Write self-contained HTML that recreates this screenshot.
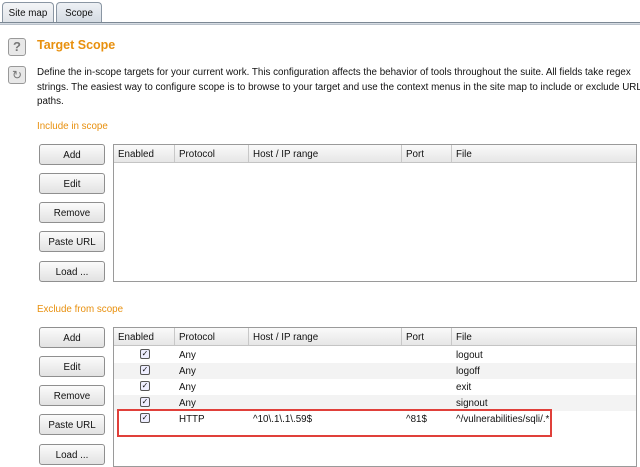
<!DOCTYPE html>
<html><head><style>
*{margin:0;padding:0;box-sizing:border-box}
body{width:640px;height:461px;background:#fff;font-family:"Liberation Sans",sans-serif;font-size:9.8px;color:#111;position:relative;overflow:hidden}
.a{position:absolute}
.tab{position:absolute;top:2px;height:21px;border:1px solid #8a96a3;border-bottom:none;border-radius:4px 4px 0 0;background:linear-gradient(#f4f5f7,#dfe3e8);font-size:9.8px;padding-top:5px;text-align:center}
.btn{position:absolute;left:39px;width:66px;height:21px;border:1px solid #8f8f8f;border-radius:3px;background:linear-gradient(#fbfbfb,#e2e2e2);text-align:center;padding-top:5px;font-size:9.8px}
.tbl{position:absolute;left:113px;width:524px;border:1px solid #9a9a9a;background:#fff}
.hd{position:relative;height:18px;background:linear-gradient(#fafafa,#e6e6e6);border-bottom:1px solid #c4c4c4}
.hd span{position:absolute;top:0;height:17px;padding:4px 0 0 4px;border-right:1px solid #c8c8c8}
.row{position:absolute;height:16px;width:100%}
.row span{position:absolute;top:3px}
.cb{position:absolute;left:26px;top:2px;width:10px;height:10px;border:1px solid #555;border-radius:2px;background:#eef;font-size:8px;line-height:8px;text-align:center}
.orange{color:#e8900e}
</style></head><body>
<div class="tab" style="left:2px;width:52px">Site map</div>
<div class="tab" style="left:56px;width:46px;background:linear-gradient(#eef1f5,#d3dae2)">Scope</div>
<div class="a" style="left:0;top:22px;width:640px;height:3px;border-top:1px solid #7c8894;border-bottom:1px solid #b9c1ca;background:#d5dbe2"></div>
<div class="a" style="left:8px;top:38px;width:18px;height:18px;border:1px solid #999;border-radius:3px;background:#e8e8e8;color:#777;font-weight:bold;font-size:13px;text-align:center;line-height:16px">?</div>
<div class="a" style="left:8px;top:66px;width:18px;height:18px;border:1px solid #999;border-radius:3px;background:#e8e8e8;color:#777;font-size:12px;text-align:center;line-height:16px">↻</div>
<div class="a orange" style="left:37px;top:38px;font-size:12.5px;font-weight:bold">Target Scope</div>
<div class="a" style="left:37px;top:66px;white-space:nowrap;line-height:14.5px">Define the in-scope targets for your current work. This configuration affects the behavior of tools throughout the suite. All fields take regex<br>strings. The easiest way to configure scope is to browse to your target and use the context menus in the site map to include or exclude URL<br>paths.</div>
<div class="a orange" style="left:37px;top:121px">Include in scope</div>
<div class="btn" style="top:144px">Add</div>
<div class="btn" style="top:173px">Edit</div>
<div class="btn" style="top:202px">Remove</div>
<div class="btn" style="top:231px">Paste URL</div>
<div class="btn" style="top:261px">Load ...</div>
<div class="tbl" style="top:144px;height:138px">
<div class="hd"><span style="left:0;width:61px">Enabled</span><span style="left:61px;width:74px">Protocol</span><span style="left:135px;width:153px">Host / IP range</span><span style="left:288px;width:50px">Port</span><span style="left:338px;width:184px;border:none">File</span></div>
</div>
<div class="a orange" style="left:37px;top:304px">Exclude from scope</div>
<div class="btn" style="top:327px">Add</div>
<div class="btn" style="top:356px">Edit</div>
<div class="btn" style="top:385px">Remove</div>
<div class="btn" style="top:414px">Paste URL</div>
<div class="btn" style="top:444px">Load ...</div>
<div class="tbl" style="top:327px;height:140px">
<div class="hd"><span style="left:0;width:61px">Enabled</span><span style="left:61px;width:74px">Protocol</span><span style="left:135px;width:153px">Host / IP range</span><span style="left:288px;width:50px">Port</span><span style="left:338px;width:184px;border:none">File</span></div>
<div class="row" style="top:19px"><div class="cb">✓</div><span style="left:65px">Any</span><span style="left:342px">logout</span></div>
<div class="row" style="top:35px;background:#f3f3f3"><div class="cb">✓</div><span style="left:65px">Any</span><span style="left:342px">logoff</span></div>
<div class="row" style="top:51px"><div class="cb">✓</div><span style="left:65px">Any</span><span style="left:342px">exit</span></div>
<div class="row" style="top:67px;background:#f3f3f3"><div class="cb">✓</div><span style="left:65px">Any</span><span style="left:342px">signout</span></div>
<div class="row" style="top:83px"><div class="cb">✓</div><span style="left:65px">HTTP</span><span style="left:139px">^10\.1\.1\.59$</span><span style="left:292px">^81$</span><span style="left:342px">^/vulnerabilities/sqli/.*</span></div>
</div>
<div class="a" style="left:117px;top:409px;width:435px;height:28px;border:2px solid #e0403a"></div>
</body></html>
